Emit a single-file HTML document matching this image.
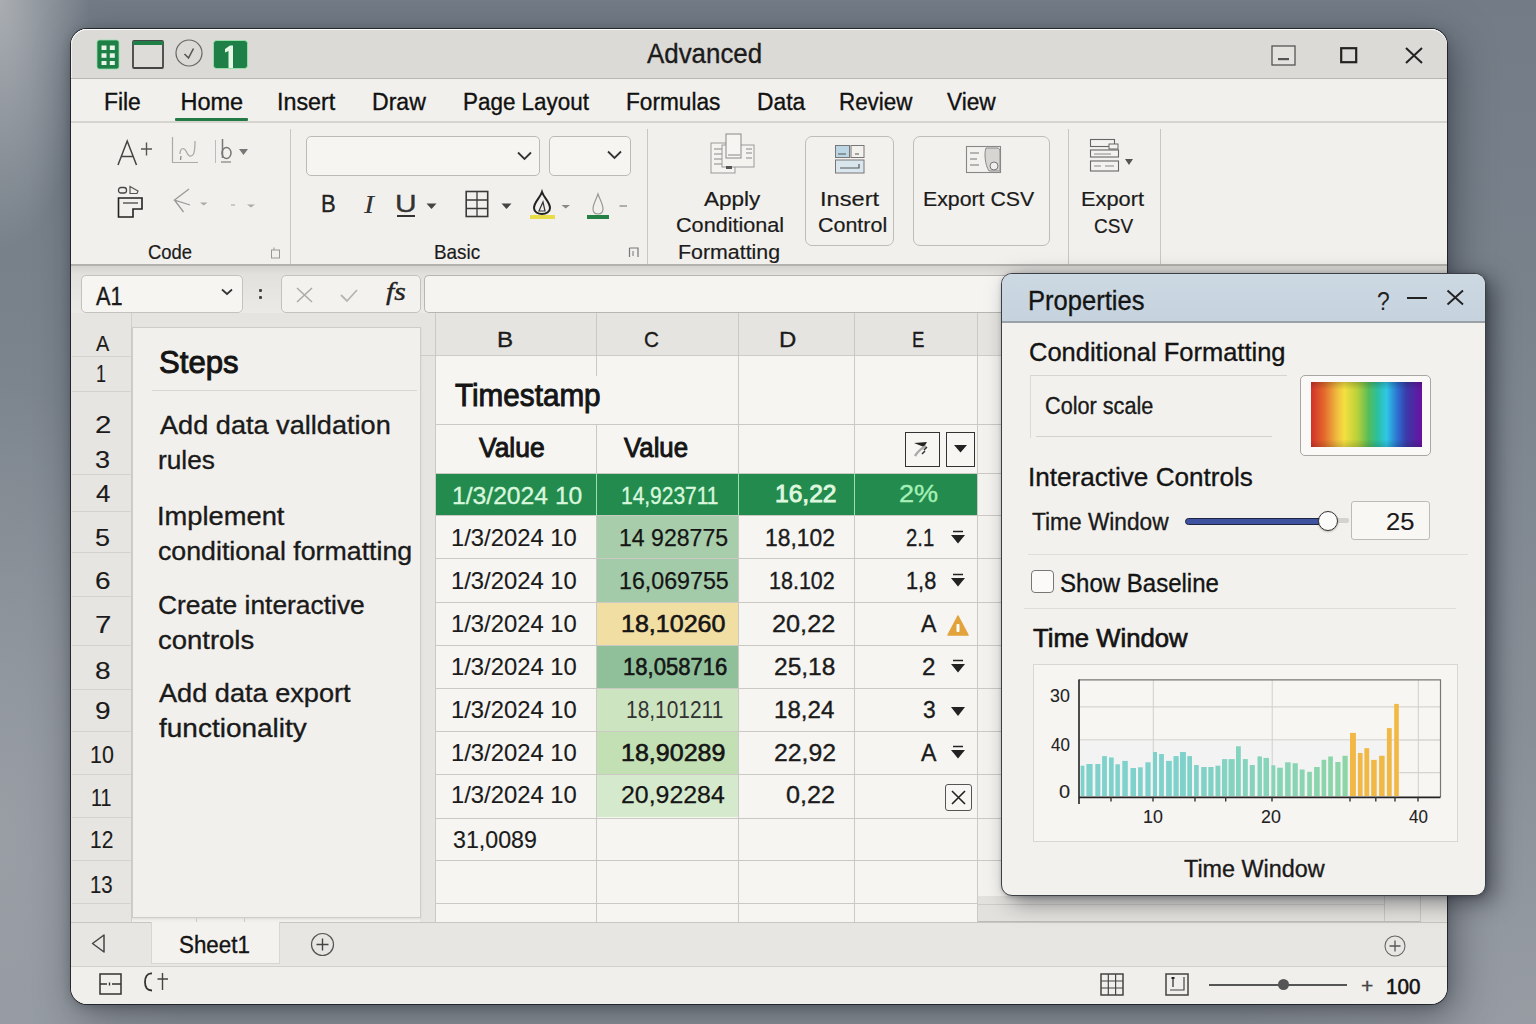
<!DOCTYPE html>
<html><head><meta charset="utf-8"><style>
html,body{margin:0;padding:0;width:1536px;height:1024px;overflow:hidden;}
body{position:relative;font-family:"Liberation Sans",sans-serif;background:#7a838c;}
.t{position:absolute;line-height:0;white-space:pre;transform-origin:0 0;}
svg{position:absolute;overflow:visible;}
</style></head><body>
<div style="position:absolute;left:0;top:0;width:1536px;height:1024px;background:linear-gradient(180deg,#737c86 0%,#79828b 30%,#868d95 65%,#8e959c 100%);"></div>
<div style="position:absolute;left:0;top:0;width:1536px;height:1024px;background:radial-gradient(ellipse 90px 250px at 0px 0px,rgba(215,215,215,0.55),rgba(215,215,215,0) 100%);"></div>
<div style="position:absolute;left:0;top:0;width:1536px;height:1024px;background:radial-gradient(ellipse 200px 450px at 0px 830px,rgba(180,183,187,0.35),rgba(180,183,187,0) 100%);"></div>
<div style="position:absolute;left:0;top:0;width:1536px;height:1024px;background:radial-gradient(ellipse 300px 300px at 1536px 1024px,rgba(175,178,182,0.25),rgba(175,178,182,0) 100%);"></div>
<div style="position:absolute;left:71px;top:29px;width:1376px;height:975px;border-radius:16px;background:#f1efeb;box-shadow:0 0 0 1px rgba(25,28,32,0.85),6px 10px 38px rgba(25,30,40,0.5),0 2px 10px rgba(25,30,40,0.25);"></div>
<div style="position:absolute;left:71px;top:29px;width:1376px;height:50px;background:#dcdad6;border-radius:16px 16px 0 0;box-shadow:inset 0 1px 0 rgba(255,255,255,0.9),inset 1px 0 0 rgba(255,255,255,0.6);"></div>
<div style="position:absolute;left:71px;top:78px;width:1376px;height:1px;background:#b9b7b3;"></div>
<div style="position:absolute;left:71px;top:79px;width:1376px;height:1px;background:#faf9f7;"></div>
<svg style="left:96px;top:39px;" width="24" height="31" viewBox="0 0 24 31"><rect x="1" y="1" width="22" height="29" rx="2.5" fill="#1e8046" stroke="#8fe0a8" stroke-width="0.8"/><rect x="5.5" y="6.5" width="5" height="4.5" fill="#e8f5e8"/><rect x="13.8" y="6.5" width="5" height="4.5" fill="#e8f5e8"/><rect x="5.5" y="14.3" width="5" height="4.5" fill="#e8f5e8"/><rect x="13.8" y="14.3" width="5" height="4.5" fill="#e8f5e8"/><rect x="5.5" y="22" width="5" height="4" fill="#e8f5e8"/><rect x="13.8" y="22" width="5" height="4" fill="#e8f5e8"/></svg>
<svg style="left:132px;top:40px;" width="32" height="29" viewBox="0 0 32 29"><rect x="1" y="1" width="30" height="27" rx="1" fill="#dedcd8" stroke="#444" stroke-width="1.8"/><rect x="1" y="1" width="30" height="4" fill="#1e8046"/></svg>
<svg style="left:175px;top:39px;" width="28" height="28" viewBox="0 0 28 28"><circle cx="14" cy="14" r="13" fill="none" stroke="#666" stroke-width="1.2"/><path d="M9.5 15 L13.5 19 L18.5 9.5" fill="none" stroke="#555" stroke-width="1.6"/></svg>
<svg style="left:213px;top:40px;" width="35" height="29" viewBox="0 0 35 29"><rect x="0.5" y="0.5" width="34" height="28" rx="3" fill="#1e8046" stroke="#9fe8b0" stroke-width="0.8"/><path d="M12 9 L17 5.5 L20 5.5 L20 28 L15.5 28 L15.5 11 L12 12.5 Z" fill="#e6f7e6"/></svg>
<div class="t" style="left:646.90px;top:54.44px;font-size:27.6px;font-weight:400;font-style:normal;font-family:'Liberation Sans';color:#1b1b1b;transform:scaleX(0.9380);-webkit-text-stroke:0.35px #1b1b1b;">Advanced</div>
<svg style="left:1271px;top:45px;" width="25" height="21" viewBox="0 0 25 21"><rect x="1" y="1" width="23" height="19" fill="#e4e2de" stroke="#555" stroke-width="1.3"/><rect x="7" y="13" width="11" height="2.2" fill="#555"/></svg>
<svg style="left:1340px;top:47px;" width="18" height="17" viewBox="0 0 18 17"><rect x="1.2" y="1.2" width="15" height="14" fill="none" stroke="#222" stroke-width="2.2"/></svg>
<svg style="left:1404px;top:46px;" width="20" height="19" viewBox="0 0 20 19"><path d="M2 2 L18 17 M18 2 L2 17" stroke="#222" stroke-width="2"/></svg>
<div style="position:absolute;left:71px;top:79px;width:1376px;height:43px;background:#f2f0ec;"></div>
<div style="position:absolute;left:71px;top:121px;width:1376px;height:2px;background:#d6d4cf;"></div>
<div class="t" style="left:104.06px;top:101.86px;font-size:23.5px;font-weight:400;font-style:normal;font-family:'Liberation Sans';color:#111;transform:scaleX(0.9714);-webkit-text-stroke:0.35px #111;">File</div>
<div class="t" style="left:180.50px;top:101.86px;font-size:23.5px;font-weight:400;font-style:normal;font-family:'Liberation Sans';color:#111;-webkit-text-stroke:0.35px #111;">Home</div>
<div class="t" style="left:276.52px;top:101.86px;font-size:23.5px;font-weight:400;font-style:normal;font-family:'Liberation Sans';color:#111;transform:scaleX(0.9912);-webkit-text-stroke:0.35px #111;">Insert</div>
<div class="t" style="left:372.04px;top:101.86px;font-size:23.5px;font-weight:400;font-style:normal;font-family:'Liberation Sans';color:#111;transform:scaleX(0.9811);-webkit-text-stroke:0.35px #111;">Draw</div>
<div class="t" style="left:463.09px;top:101.86px;font-size:23.5px;font-weight:400;font-style:normal;font-family:'Liberation Sans';color:#111;transform:scaleX(0.9538);-webkit-text-stroke:0.35px #111;">Page Layout</div>
<div class="t" style="left:625.57px;top:101.86px;font-size:23.5px;font-weight:400;font-style:normal;font-family:'Liberation Sans';color:#111;transform:scaleX(0.9635);-webkit-text-stroke:0.35px #111;">Formulas</div>
<div class="t" style="left:757.36px;top:101.86px;font-size:23.5px;font-weight:400;font-style:normal;font-family:'Liberation Sans';color:#111;transform:scaleX(0.9708);-webkit-text-stroke:0.35px #111;">Data</div>
<div class="t" style="left:838.60px;top:101.86px;font-size:23.5px;font-weight:400;font-style:normal;font-family:'Liberation Sans';color:#111;transform:scaleX(0.9520);-webkit-text-stroke:0.35px #111;">Review</div>
<div class="t" style="left:947.40px;top:101.86px;font-size:23.5px;font-weight:400;font-style:normal;font-family:'Liberation Sans';color:#111;transform:scaleX(0.9647);-webkit-text-stroke:0.35px #111;">View</div>
<div style="position:absolute;left:175px;top:118px;width:73px;height:3px;background:#237a45;border-radius:1px;"></div>
<div style="position:absolute;left:71px;top:123px;width:1376px;height:142px;background:#f2f0ec;"></div>
<div style="position:absolute;left:71px;top:264px;width:1376px;height:2px;background:#b3b1ad;"></div>
<div style="position:absolute;left:290px;top:129px;width:1px;height:135px;background:#c9c7c2;"></div>
<div style="position:absolute;left:647px;top:129px;width:1px;height:135px;background:#c9c7c2;"></div>
<div style="position:absolute;left:1068px;top:129px;width:1px;height:135px;background:#c9c7c2;"></div>
<div style="position:absolute;left:1160px;top:129px;width:1px;height:135px;background:#c9c7c2;"></div>
<div class="t" style="left:148.12px;top:251.72px;font-size:21px;font-weight:400;font-style:normal;font-family:'Liberation Sans';color:#1b1b1b;transform:scaleX(0.8776);-webkit-text-stroke:0.2px #1b1b1b;">Code</div>
<div class="t" style="left:434.20px;top:251.72px;font-size:21px;font-weight:400;font-style:normal;font-family:'Liberation Sans';color:#1b1b1b;transform:scaleX(0.8980);-webkit-text-stroke:0.2px #1b1b1b;">Basic</div>
<svg style="left:270px;top:246px;" width="12" height="13" viewBox="0 0 12 13"><rect x="1.5" y="4" width="8" height="8" fill="none" stroke="#999" stroke-width="1"/><path d="M4 1.5 L4 4" stroke="#999"/></svg>
<svg style="left:628px;top:246px;" width="12" height="13" viewBox="0 0 12 13"><path d="M1.5 2 L10 2 L10 11 M1.5 2 L1.5 11" fill="none" stroke="#777" stroke-width="1.2"/><path d="M5 5 L5 10" stroke="#777"/></svg>
<svg style="left:115px;top:139px;" width="40" height="28" viewBox="0 0 40 28"><path d="M3 26 L12.2 2 L21.5 26 M6.5 17.5 L18 17.5" fill="none" stroke="#444" stroke-width="1.5"/><path d="M31.5 3.5 L31.5 16.5 M26 10 L37 10" stroke="#555" stroke-width="1.4"/></svg>
<svg style="left:171px;top:136px;" width="28" height="28" viewBox="0 0 28 28"><path d="M1.5 1 L1.5 26.5 L27 26.5" fill="none" stroke="#aaa" stroke-width="1.2"/><path d="M9 18 C9 12 13 11 15 15 C17 20 20 22 22.5 18 C24 15 24 8 24 5" fill="none" stroke="#aaa" stroke-width="1.3"/><path d="M10 20 L9.5 24" stroke="#888" stroke-width="1.2"/></svg>
<svg style="left:214px;top:138px;" width="36" height="26" viewBox="0 0 36 26"><path d="M1.5 2 L1.5 25" stroke="#bbb" stroke-width="1"/><path d="M8.5 1 L8.5 20" stroke="#777" stroke-width="1.5"/><ellipse cx="12.5" cy="15" rx="4.5" ry="5.5" fill="none" stroke="#777" stroke-width="1.5"/><path d="M7 24 L17 24" stroke="#888" stroke-width="1.3"/><path d="M25 11 L34 11 L29.5 17 Z" fill="#777"/></svg>
<svg style="left:116px;top:185px;" width="30" height="34" viewBox="0 0 30 34"><rect x="2.5" y="2.5" width="8" height="5.5" rx="2.5" fill="none" stroke="#444" stroke-width="1.3"/><path d="M14 1.5 L22 6 L21 8.5 L14 8.5 Z" fill="none" stroke="#555" stroke-width="1.2"/><path d="M2.5 32 L2.5 13 L26 13 L26 24 L17 24 L17 32 Z" fill="none" stroke="#222" stroke-width="1.6"/><path d="M7 18 L22 18" stroke="#444" stroke-width="1.3"/></svg>
<svg style="left:172px;top:186px;" width="20" height="29" viewBox="0 0 20 29"><path d="M17 3 L2.5 14 L18 19 M2.5 14 L11.5 26" fill="none" stroke="#999" stroke-width="1.3"/></svg>
<svg style="left:199px;top:201px;" width="10" height="6" viewBox="0 0 10 6"><path d="M1 1.5 L8.5 1.5 L4.8 4.5 Z" fill="#aaa"/></svg>
<svg style="left:230px;top:203px;" width="28" height="6" viewBox="0 0 28 6"><path d="M1 2 L5 2" stroke="#bbb" stroke-width="1.5"/><path d="M17 1.5 L25 1.5 L21 4.5 Z" fill="#aaa"/></svg>
<div style="position:absolute;left:306px;top:136px;width:234px;height:40px;box-sizing:border-box;background:#f6f5f2;border:1.4px solid #bcbab5;border-radius:5px;"></div>
<div style="position:absolute;left:549px;top:136px;width:82px;height:40px;box-sizing:border-box;background:#f6f5f2;border:1.4px solid #bcbab5;border-radius:5px;"></div>
<svg style="left:516px;top:150px;" width="18" height="12" viewBox="0 0 18 12"><path d="M2 2.5 L8.5 9 L15 2.5" fill="none" stroke="#333" stroke-width="1.8"/></svg>
<svg style="left:606px;top:149px;" width="18" height="12" viewBox="0 0 18 12"><path d="M2 2.5 L8.5 9 L15 2.5" fill="none" stroke="#333" stroke-width="1.8"/></svg>
<div class="t" style="left:320.71px;top:204.44px;font-size:24.7px;font-weight:400;font-style:normal;font-family:'Liberation Sans';color:#222;transform:scaleX(0.8929);-webkit-text-stroke:0.35px #222;">B</div>
<div class="t" style="left:364.00px;top:204.94px;font-size:24.7px;font-weight:400;font-style:italic;font-family:'Liberation Serif';color:#333;transform:scaleX(1.2222);">I</div>
<div class="t" style="left:395.07px;top:204.44px;font-size:24.7px;font-weight:400;font-style:normal;font-family:'Liberation Sans';color:#333;transform:scaleX(1.2143);-webkit-text-stroke:0.35px #333;">U</div>
<div style="position:absolute;left:397px;top:215px;width:18px;height:2px;background:#333;"></div>
<svg style="left:425px;top:202px;" width="14" height="8" viewBox="0 0 14 8"><path d="M1.5 1.5 L11.5 1.5 L6.5 7 Z" fill="#444"/></svg>
<svg style="left:465px;top:190px;" width="24" height="28" viewBox="0 0 24 28"><rect x="1.2" y="1.5" width="21.5" height="25" fill="none" stroke="#3a3a3a" stroke-width="1.6"/><path d="M12 1.5 L12 26.5 M1 10 L22.5 10 M1 18.5 L22.5 18.5" stroke="#3a3a3a" stroke-width="1.3"/></svg>
<svg style="left:500px;top:202px;" width="14" height="8" viewBox="0 0 14 8"><path d="M1.5 1.5 L11.5 1.5 L6.5 7 Z" fill="#444"/></svg>
<svg style="left:530px;top:190px;" width="26" height="30" viewBox="0 0 26 30"><path d="M12 2 C10 8 4 12 4 18 C4 22 8 24 12 24 C16 24 20 22 20 18 C20 12 14 8 12 2 Z" fill="none" stroke="#222" stroke-width="2"/><path d="M9 21 L15 21 L13 12 Z" fill="none" stroke="#333" stroke-width="1.2"/><rect x="0" y="25" width="25" height="4" fill="#e8dc4a"/></svg>
<svg style="left:560px;top:204px;" width="12" height="6" viewBox="0 0 12 6"><path d="M1.5 1 L10 1 L5.7 4.5 Z" fill="#888"/></svg>
<svg style="left:587px;top:192px;" width="23" height="28" viewBox="0 0 23 28"><path d="M11 2 C9 8 6 12 6 17 C6 20 8 22 11 22 C14 22 16 20 16 17 C16 12 13 8 11 2 Z" fill="none" stroke="#999" stroke-width="1.2"/><rect x="0" y="23" width="22" height="4" fill="#258046"/></svg>
<svg style="left:618px;top:204px;" width="12" height="6" viewBox="0 0 12 6"><path d="M1.5 2 L9 2" stroke="#999" stroke-width="1.5"/></svg>
<svg style="left:710px;top:133px;" width="46" height="42" viewBox="0 0 46 42"><rect x="1" y="10" width="24" height="30" fill="#f4f3ef" stroke="#999" stroke-width="1"/><path d="M4 16 L14 16 M4 21 L12 21 M4 26 L14 26 M4 31 L20 31" stroke="#888" stroke-width="1.2"/><rect x="12" y="12" width="32" height="22" fill="#f4f3ef" stroke="#999" stroke-width="1"/><rect x="16" y="1" width="15" height="24" fill="#f6f5f1" stroke="#888" stroke-width="1"/><path d="M18 22 L30 22 M36 16 L42 16 M36 20 L42 20 M36 25 L42 25" stroke="#888" stroke-width="1.1"/><rect x="16" y="33" width="6" height="3" fill="#555"/></svg>
<div class="t" style="left:704.00px;top:198.90px;font-size:20.5px;font-weight:400;font-style:normal;font-family:'Liberation Sans';color:#1b1b1b;transform:scaleX(1.0980);-webkit-text-stroke:0.2px #1b1b1b;">Apply</div>
<div class="t" style="left:676.45px;top:225.40px;font-size:20.5px;font-weight:400;font-style:normal;font-family:'Liberation Sans';color:#1b1b1b;transform:scaleX(1.0545);-webkit-text-stroke:0.2px #1b1b1b;">Conditional</div>
<div class="t" style="left:678.46px;top:251.90px;font-size:20.5px;font-weight:400;font-style:normal;font-family:'Liberation Sans';color:#1b1b1b;transform:scaleX(1.0417);-webkit-text-stroke:0.2px #1b1b1b;">Formatting</div>
<div style="position:absolute;left:805px;top:136px;width:89px;height:110px;box-sizing:border-box;border:1.3px solid #bfbdb8;border-radius:7px;background:#f3f1ed;"></div>
<svg style="left:834px;top:144px;" width="32" height="32" viewBox="0 0 32 32"><rect x="1.5" y="1.5" width="14" height="12" fill="#bcd6e6" stroke="#777" stroke-width="1"/><rect x="17" y="1.5" width="13" height="12" fill="#f2f1ee" stroke="#777" stroke-width="1"/><path d="M4 10 L12 10 M21 10 L25 10" stroke="#555" stroke-width="1.2"/><rect x="1.5" y="16" width="28.5" height="13" fill="#d9e6ee" stroke="#777" stroke-width="1"/><path d="M6 24 L25 24 L25 20" fill="none" stroke="#555" stroke-width="1.2"/></svg>
<div class="t" style="left:820.19px;top:198.90px;font-size:20.5px;font-weight:400;font-style:normal;font-family:'Liberation Sans';color:#1b1b1b;transform:scaleX(1.1531);-webkit-text-stroke:0.2px #1b1b1b;">Insert</div>
<div class="t" style="left:817.95px;top:224.90px;font-size:20.5px;font-weight:400;font-style:normal;font-family:'Liberation Sans';color:#1b1b1b;transform:scaleX(1.0469);-webkit-text-stroke:0.2px #1b1b1b;">Control</div>
<div style="position:absolute;left:913px;top:136px;width:137px;height:110px;box-sizing:border-box;border:1.3px solid #bfbdb8;border-radius:7px;background:#f3f1ed;"></div>
<svg style="left:965px;top:145px;" width="38" height="30" viewBox="0 0 38 30"><rect x="1.5" y="1.5" width="34" height="26" fill="#f2f1ee" stroke="#888" stroke-width="1.1"/><path d="M5 8 L14 8 M5 14 L12 14 M5 20 L14 20" stroke="#777" stroke-width="1.2"/><path d="M21 3 L32 3 C34 3 35 4 35 7 L35 26 L24 26 C20 20 19 8 21 3 Z" fill="#d6d5d2" stroke="#888" stroke-width="1"/><circle cx="29" cy="21" r="4" fill="#eee" stroke="#777" stroke-width="1"/></svg>
<div class="t" style="left:922.96px;top:198.90px;font-size:20.5px;font-weight:400;font-style:normal;font-family:'Liberation Sans';color:#1b1b1b;transform:scaleX(1.0377);-webkit-text-stroke:0.2px #1b1b1b;">Export CSV</div>
<svg style="left:1089px;top:138px;" width="46" height="36" viewBox="0 0 46 36"><rect x="1.5" y="1.5" width="24" height="7" fill="#f3f2ee" stroke="#666" stroke-width="1.1"/><rect x="20" y="6" width="9" height="5" fill="#f3f2ee" stroke="#666" stroke-width="1"/><rect x="1.5" y="12" width="28" height="7" fill="#f3f2ee" stroke="#666" stroke-width="1.1"/><path d="M5 16 L22 16" stroke="#888"/><rect x="1.5" y="23" width="28" height="10" fill="#f3f2ee" stroke="#666" stroke-width="1.1"/><path d="M5 28 L12 28 M16 28 L25 28" stroke="#888" stroke-width="1.2"/><path d="M36 21 L44 21 L40 27 Z" fill="#555"/></svg>
<div class="t" style="left:1080.94px;top:199.40px;font-size:20.5px;font-weight:400;font-style:normal;font-family:'Liberation Sans';color:#1b1b1b;transform:scaleX(1.0621);-webkit-text-stroke:0.2px #1b1b1b;">Export</div>
<div class="t" style="left:1094.07px;top:225.60px;font-size:20.5px;font-weight:400;font-style:normal;font-family:'Liberation Sans';color:#1b1b1b;transform:scaleX(0.9268);-webkit-text-stroke:0.2px #1b1b1b;">CSV</div>
<div style="position:absolute;left:71px;top:266px;width:1376px;height:48px;background:linear-gradient(180deg,#d6d4d0 0px,#e3e1dd 9px,#eceae6 100%);"></div>
<div style="position:absolute;left:81px;top:275px;width:162px;height:38px;box-sizing:border-box;background:#f6f5f2;border:1.3px solid #c4c2bd;border-radius:5px;"></div>
<div class="t" style="left:96.00px;top:296.16px;font-size:25.5px;font-weight:400;font-style:normal;font-family:'Liberation Sans';color:#1a1a1a;transform:scaleX(0.8500);-webkit-text-stroke:0.35px #1a1a1a;">A1</div>
<svg style="left:220px;top:287px;" width="14" height="10" viewBox="0 0 14 10"><path d="M2 2.5 L7 7 L12 2.5" fill="none" stroke="#333" stroke-width="1.7"/></svg>
<div style="position:absolute;left:259px;top:289px;width:3px;height:3px;background:#444;border-radius:1px;"></div>
<div style="position:absolute;left:259px;top:296px;width:3px;height:3px;background:#444;border-radius:1px;"></div>
<div style="position:absolute;left:281px;top:275px;width:140px;height:38px;box-sizing:border-box;background:#f3f2ee;border:1.3px solid #c4c2bd;border-radius:5px;"></div>
<svg style="left:295px;top:286px;" width="19" height="18" viewBox="0 0 19 18"><path d="M2 2 L17 16 M17 2 L2 16" stroke="#aaa" stroke-width="1.5"/></svg>
<svg style="left:339px;top:288px;" width="20" height="15" viewBox="0 0 20 15"><path d="M2 7 L8 13 L18 2" fill="none" stroke="#b5b5b5" stroke-width="1.8"/></svg>
<div class="t" style="left:386.00px;top:292.34px;font-size:25px;font-weight:400;font-style:italic;font-family:'Liberation Serif';color:#222;transform:scaleX(1.1875);-webkit-text-stroke:0.35px #222;">fs</div>
<div style="position:absolute;left:424px;top:275px;width:1023px;height:38px;box-sizing:border-box;background:#f5f4f1;border:1.3px solid #b8b6b1;border-right:none;border-radius:5px 0 0 5px;"></div>
<div style="position:absolute;left:71px;top:313px;width:1376px;height:43px;background:#e6e4e0;"></div>
<div style="position:absolute;left:131px;top:355px;width:1316px;height:2px;background:#cfcdc8;"></div>
<div style="position:absolute;left:71px;top:313px;width:60px;height:609px;background:#e7e5e1;"></div>
<div style="position:absolute;left:131px;top:313px;width:1px;height:609px;background:#d2d0cb;"></div>
<div style="position:absolute;left:72px;top:356px;width:59px;height:1px;background:#d4d2cd;"></div>
<div style="position:absolute;left:72px;top:391px;width:59px;height:1px;background:#d4d2cd;"></div>
<div style="position:absolute;left:72px;top:474px;width:59px;height:1px;background:#d4d2cd;"></div>
<div style="position:absolute;left:72px;top:511px;width:59px;height:1px;background:#d4d2cd;"></div>
<div style="position:absolute;left:72px;top:552px;width:59px;height:1px;background:#d4d2cd;"></div>
<div style="position:absolute;left:72px;top:596px;width:59px;height:1px;background:#d4d2cd;"></div>
<div style="position:absolute;left:72px;top:645px;width:59px;height:1px;background:#d4d2cd;"></div>
<div style="position:absolute;left:72px;top:689px;width:59px;height:1px;background:#d4d2cd;"></div>
<div style="position:absolute;left:72px;top:731px;width:59px;height:1px;background:#d4d2cd;"></div>
<div style="position:absolute;left:72px;top:774px;width:59px;height:1px;background:#d4d2cd;"></div>
<div style="position:absolute;left:72px;top:817px;width:59px;height:1px;background:#d4d2cd;"></div>
<div style="position:absolute;left:72px;top:860px;width:59px;height:1px;background:#d4d2cd;"></div>
<div style="position:absolute;left:72px;top:903px;width:59px;height:1px;background:#d4d2cd;"></div>
<div class="t" style="left:96.20px;top:343.00px;font-size:22.8px;font-weight:400;font-style:normal;font-family:'Liberation Sans';color:#1b1b1b;transform:scaleX(0.8733);-webkit-text-stroke:0.15px #1b1b1b;">A</div>
<div class="t" style="left:96.00px;top:373.68px;font-size:24px;font-weight:400;font-style:normal;font-family:'Liberation Sans';color:#1b1b1b;transform:scaleX(0.7500);-webkit-text-stroke:0.15px #1b1b1b;">1</div>
<div class="t" style="left:94.77px;top:425.28px;font-size:24px;font-weight:400;font-style:normal;font-family:'Liberation Sans';color:#1b1b1b;transform:scaleX(1.2273);-webkit-text-stroke:0.15px #1b1b1b;">2</div>
<div class="t" style="left:94.88px;top:460.38px;font-size:24px;font-weight:400;font-style:normal;font-family:'Liberation Sans';color:#1b1b1b;transform:scaleX(1.1250);-webkit-text-stroke:0.15px #1b1b1b;">3</div>
<div class="t" style="left:96.00px;top:493.88px;font-size:24px;font-weight:400;font-style:normal;font-family:'Liberation Sans';color:#1b1b1b;transform:scaleX(1.0769);-webkit-text-stroke:0.15px #1b1b1b;">4</div>
<div class="t" style="left:94.88px;top:537.68px;font-size:24px;font-weight:400;font-style:normal;font-family:'Liberation Sans';color:#1b1b1b;transform:scaleX(1.1250);-webkit-text-stroke:0.15px #1b1b1b;">5</div>
<div class="t" style="left:94.83px;top:581.18px;font-size:24px;font-weight:400;font-style:normal;font-family:'Liberation Sans';color:#1b1b1b;transform:scaleX(1.1667);-webkit-text-stroke:0.15px #1b1b1b;">6</div>
<div class="t" style="left:94.77px;top:624.68px;font-size:24px;font-weight:400;font-style:normal;font-family:'Liberation Sans';color:#1b1b1b;transform:scaleX(1.2273);-webkit-text-stroke:0.15px #1b1b1b;">7</div>
<div class="t" style="left:94.83px;top:670.68px;font-size:24px;font-weight:400;font-style:normal;font-family:'Liberation Sans';color:#1b1b1b;transform:scaleX(1.1667);-webkit-text-stroke:0.15px #1b1b1b;">8</div>
<div class="t" style="left:94.83px;top:710.68px;font-size:24px;font-weight:400;font-style:normal;font-family:'Liberation Sans';color:#1b1b1b;transform:scaleX(1.1667);-webkit-text-stroke:0.15px #1b1b1b;">9</div>
<div class="t" style="left:89.82px;top:755.28px;font-size:24px;font-weight:400;font-style:normal;font-family:'Liberation Sans';color:#1b1b1b;transform:scaleX(0.8917);-webkit-text-stroke:0.15px #1b1b1b;">10</div>
<div class="t" style="left:91.36px;top:798.08px;font-size:24px;font-weight:400;font-style:normal;font-family:'Liberation Sans';color:#1b1b1b;transform:scaleX(0.8182);-webkit-text-stroke:0.15px #1b1b1b;">11</div>
<div class="t" style="left:89.85px;top:840.08px;font-size:24px;font-weight:400;font-style:normal;font-family:'Liberation Sans';color:#1b1b1b;transform:scaleX(0.8750);-webkit-text-stroke:0.15px #1b1b1b;">12</div>
<div class="t" style="left:89.90px;top:884.68px;font-size:24px;font-weight:400;font-style:normal;font-family:'Liberation Sans';color:#1b1b1b;transform:scaleX(0.8500);-webkit-text-stroke:0.15px #1b1b1b;">13</div>
<div style="position:absolute;left:420px;top:356px;width:15px;height:566px;background:#e7e5e1;"></div>
<div style="position:absolute;left:978px;top:356px;width:469px;height:566px;background:#f3f2ee;"></div>
<div style="position:absolute;left:435px;top:356px;width:543px;height:566px;background:#f6f5f2;"></div>
<div style="position:absolute;left:435px;top:473px;width:543px;height:42px;background:#238b4e;"></div>
<div style="position:absolute;left:595.5px;top:515px;width:142.5px;height:43px;background:#a8cdaa;"></div>
<div style="position:absolute;left:595.5px;top:558px;width:142.5px;height:43.5px;background:#a3caa9;"></div>
<div style="position:absolute;left:595.5px;top:601.5px;width:142.5px;height:43.5px;background:#f1dea3;"></div>
<div style="position:absolute;left:595.5px;top:645px;width:142.5px;height:43px;background:#90c09a;"></div>
<div style="position:absolute;left:595.5px;top:688px;width:142.5px;height:43px;background:#cde4c0;"></div>
<div style="position:absolute;left:595.5px;top:731px;width:142.5px;height:43px;background:#c3dfb4;"></div>
<div style="position:absolute;left:595.5px;top:774px;width:142.5px;height:43px;background:#d5e9cc;"></div>
<div style="position:absolute;left:435px;top:424px;width:566px;height:1px;background:#cbc9c4;"></div>
<div style="position:absolute;left:435px;top:473px;width:566px;height:1px;background:#cbc9c4;"></div>
<div style="position:absolute;left:435px;top:515px;width:566px;height:1px;background:#cbc9c4;"></div>
<div style="position:absolute;left:435px;top:558px;width:566px;height:1px;background:#cbc9c4;"></div>
<div style="position:absolute;left:435px;top:602px;width:566px;height:1px;background:#cbc9c4;"></div>
<div style="position:absolute;left:435px;top:645px;width:566px;height:1px;background:#cbc9c4;"></div>
<div style="position:absolute;left:435px;top:688px;width:566px;height:1px;background:#cbc9c4;"></div>
<div style="position:absolute;left:435px;top:731px;width:566px;height:1px;background:#cbc9c4;"></div>
<div style="position:absolute;left:435px;top:774px;width:566px;height:1px;background:#cbc9c4;"></div>
<div style="position:absolute;left:435px;top:818px;width:566px;height:1px;background:#cbc9c4;"></div>
<div style="position:absolute;left:435px;top:860px;width:566px;height:1px;background:#cbc9c4;"></div>
<div style="position:absolute;left:435px;top:903px;width:566px;height:1px;background:#cbc9c4;"></div>
<div style="position:absolute;left:435px;top:313px;width:1px;height:609px;background:#cbc9c4;"></div>
<div style="position:absolute;left:738px;top:313px;width:1px;height:609px;background:#cbc9c4;"></div>
<div style="position:absolute;left:854px;top:313px;width:1px;height:609px;background:#cbc9c4;"></div>
<div style="position:absolute;left:977px;top:313px;width:1px;height:609px;background:#cbc9c4;"></div>
<div style="position:absolute;left:596px;top:313px;width:1px;height:63px;background:#cbc9c4;"></div>
<div style="position:absolute;left:596px;top:424px;width:1px;height:498px;background:#cbc9c4;"></div>
<div style="position:absolute;left:596px;top:473px;width:1px;height:42px;background:#9fdcae;"></div>
<div style="position:absolute;left:738px;top:473px;width:1px;height:42px;background:#9fdcae;"></div>
<div style="position:absolute;left:854px;top:473px;width:1px;height:42px;background:#9fdcae;"></div>
<div class="t" style="left:497.18px;top:339.20px;font-size:22.8px;font-weight:400;font-style:normal;font-family:'Liberation Sans';color:#1b1b1b;transform:scaleX(1.0583);-webkit-text-stroke:0.35px #1b1b1b;">B</div>
<div class="t" style="left:644.09px;top:339.20px;font-size:22.8px;font-weight:400;font-style:normal;font-family:'Liberation Sans';color:#1b1b1b;transform:scaleX(0.9067);-webkit-text-stroke:0.35px #1b1b1b;">C</div>
<div class="t" style="left:778.90px;top:339.20px;font-size:22.8px;font-weight:400;font-style:normal;font-family:'Liberation Sans';color:#1b1b1b;transform:scaleX(1.0500);-webkit-text-stroke:0.35px #1b1b1b;">D</div>
<div class="t" style="left:912.47px;top:339.20px;font-size:22.8px;font-weight:400;font-style:normal;font-family:'Liberation Sans';color:#1b1b1b;transform:scaleX(0.8154);-webkit-text-stroke:0.35px #1b1b1b;">E</div>
<div class="t" style="left:455.40px;top:394.91px;font-size:32px;font-weight:400;font-style:normal;font-family:'Liberation Sans';color:#151515;transform:scaleX(0.9269);-webkit-text-stroke:0.95px #151515;">Timestamp</div>
<div class="t" style="left:479.00px;top:448.14px;font-size:27px;font-weight:400;font-style:normal;font-family:'Liberation Sans';color:#151515;transform:scaleX(0.9791);-webkit-text-stroke:0.95px #151515;">Value</div>
<div class="t" style="left:624.00px;top:448.14px;font-size:27px;font-weight:400;font-style:normal;font-family:'Liberation Sans';color:#151515;transform:scaleX(0.9552);-webkit-text-stroke:0.95px #151515;">Value</div>
<div style="position:absolute;left:905px;top:432px;width:35px;height:35px;box-sizing:border-box;border:1.3px solid #333;background:#f7f6f3;"></div>
<svg style="left:912px;top:440px;" width="22" height="20" viewBox="0 0 22 20"><path d="M2 3 L15 2 L12 7 Z" fill="#222"/><path d="M3 16 C6 11 10 8 14 6" stroke="#aaa" stroke-width="2.5" fill="none"/><path d="M12 10 L15 7 M10 14 L13 11" stroke="#333" stroke-width="1.5"/></svg>
<div style="position:absolute;left:946px;top:432px;width:29px;height:35px;box-sizing:border-box;border:1.3px solid #333;background:#f7f6f3;"></div>
<svg style="left:953px;top:444px;" width="16" height="10" viewBox="0 0 16 10"><path d="M1 1 L14 1 L7.5 8.5 Z" fill="#222"/></svg>
<div class="t" style="left:451.97px;top:495.68px;font-size:24px;font-weight:400;font-style:normal;font-family:'Liberation Sans';color:#d9f7dc;transform:scaleX(1.0280);-webkit-text-stroke:0.35px #d9f7dc;">1/3/2024 10</div>
<div class="t" style="left:621.13px;top:495.68px;font-size:24px;font-weight:400;font-style:normal;font-family:'Liberation Sans';color:#d9f7dc;transform:scaleX(0.8727);-webkit-text-stroke:0.35px #d9f7dc;">14,923711</div>
<div class="t" style="left:774.50px;top:494.31px;font-size:24.5px;font-weight:400;font-style:normal;font-family:'Liberation Sans';color:#dff7df;transform:scaleX(1.0033);-webkit-text-stroke:0.95px #dff7df;">16,22</div>
<div class="t" style="left:898.69px;top:494.31px;font-size:24.5px;font-weight:400;font-style:normal;font-family:'Liberation Sans';color:#a6f0b6;transform:scaleX(1.1059);-webkit-text-stroke:0.35px #a6f0b6;">2%</div>
<div class="t" style="left:451.02px;top:537.68px;font-size:24px;font-weight:400;font-style:normal;font-family:'Liberation Sans';color:#1b1b1b;transform:scaleX(0.9919);-webkit-text-stroke:0.12px #1b1b1b;">1/3/2024 10</div>
<div class="t" style="left:618.68px;top:537.68px;font-size:24px;font-weight:400;font-style:normal;font-family:'Liberation Sans';color:#151515;transform:scaleX(0.9613);-webkit-text-stroke:0.25px #151515;">14 928775</div>
<div class="t" style="left:765.05px;top:537.68px;font-size:24px;font-weight:400;font-style:normal;font-family:'Liberation Sans';color:#1b1b1b;transform:scaleX(0.9514);-webkit-text-stroke:0.35px #1b1b1b;">18,102</div>
<div class="t" style="left:906.16px;top:537.68px;font-size:24px;font-weight:400;font-style:normal;font-family:'Liberation Sans';color:#1b1b1b;transform:scaleX(0.8438);-webkit-text-stroke:0.35px #1b1b1b;">2.1</div>
<svg style="left:950px;top:530px;" width="16" height="15" viewBox="0 0 16 15"><path d="M3 1.5 L13 1.5" stroke="#222" stroke-width="1.5"/><path d="M1 5 L15 5 L8 13.5 Z" fill="#222"/></svg>
<div class="t" style="left:451.02px;top:580.68px;font-size:24px;font-weight:400;font-style:normal;font-family:'Liberation Sans';color:#1b1b1b;transform:scaleX(0.9919);-webkit-text-stroke:0.12px #1b1b1b;">1/3/2024 10</div>
<div class="t" style="left:618.66px;top:580.68px;font-size:24px;font-weight:400;font-style:normal;font-family:'Liberation Sans';color:#151515;transform:scaleX(0.9676);-webkit-text-stroke:0.25px #151515;">16,069755</div>
<div class="t" style="left:769.10px;top:580.68px;font-size:24px;font-weight:400;font-style:normal;font-family:'Liberation Sans';color:#1b1b1b;transform:scaleX(0.8958);-webkit-text-stroke:0.35px #1b1b1b;">18.102</div>
<div class="t" style="left:906.09px;top:580.68px;font-size:24px;font-weight:400;font-style:normal;font-family:'Liberation Sans';color:#1b1b1b;transform:scaleX(0.9062);-webkit-text-stroke:0.35px #1b1b1b;">1,8</div>
<svg style="left:950px;top:573px;" width="16" height="15" viewBox="0 0 16 15"><path d="M3 1.5 L13 1.5" stroke="#222" stroke-width="1.5"/><path d="M1 5 L15 5 L8 13.5 Z" fill="#222"/></svg>
<div class="t" style="left:451.02px;top:624.48px;font-size:24px;font-weight:400;font-style:normal;font-family:'Liberation Sans';color:#1b1b1b;transform:scaleX(0.9919);-webkit-text-stroke:0.12px #1b1b1b;">1/3/2024 10</div>
<div class="t" style="left:620.66px;top:624.48px;font-size:24px;font-weight:400;font-style:normal;font-family:'Liberation Sans';color:#151515;transform:scaleX(1.0434);-webkit-text-stroke:0.6px #151515;">18,10260</div>
<div class="t" style="left:772.35px;top:624.48px;font-size:24px;font-weight:400;font-style:normal;font-family:'Liberation Sans';color:#1b1b1b;transform:scaleX(1.0534);-webkit-text-stroke:0.35px #1b1b1b;">20,22</div>
<div class="t" style="left:921.30px;top:624.48px;font-size:24px;font-weight:400;font-style:normal;font-family:'Liberation Sans';color:#1b1b1b;transform:scaleX(0.9625);-webkit-text-stroke:0.35px #1b1b1b;">A</div>
<svg style="left:947px;top:614.8px;" width="22" height="22" viewBox="0 0 22 22"><path d="M11 1 L21 20 L1 20 Z" fill="#e2a33c" stroke="#e2a33c" stroke-width="1.5" stroke-linejoin="round"/><rect x="9.5" y="9" width="3" height="8" fill="#fff" rx="1"/></svg>
<div class="t" style="left:451.02px;top:666.88px;font-size:24px;font-weight:400;font-style:normal;font-family:'Liberation Sans';color:#1b1b1b;transform:scaleX(0.9919);-webkit-text-stroke:0.12px #1b1b1b;">1/3/2024 10</div>
<div class="t" style="left:623.08px;top:666.88px;font-size:24px;font-weight:400;font-style:normal;font-family:'Liberation Sans';color:#151515;transform:scaleX(0.9196);-webkit-text-stroke:0.6px #151515;">18,058716</div>
<div class="t" style="left:774.18px;top:666.88px;font-size:24px;font-weight:400;font-style:normal;font-family:'Liberation Sans';color:#1b1b1b;transform:scaleX(1.0224);-webkit-text-stroke:0.35px #1b1b1b;">25,18</div>
<div class="t" style="left:922.49px;top:666.88px;font-size:24px;font-weight:400;font-style:normal;font-family:'Liberation Sans';color:#1b1b1b;transform:scaleX(1.0083);-webkit-text-stroke:0.35px #1b1b1b;">2</div>
<svg style="left:950px;top:659.2px;" width="16" height="15" viewBox="0 0 16 15"><path d="M3 1.5 L13 1.5" stroke="#222" stroke-width="1.5"/><path d="M1 5 L15 5 L8 13.5 Z" fill="#222"/></svg>
<div class="t" style="left:451.02px;top:709.68px;font-size:24px;font-weight:400;font-style:normal;font-family:'Liberation Sans';color:#1b1b1b;transform:scaleX(0.9919);-webkit-text-stroke:0.12px #1b1b1b;">1/3/2024 10</div>
<div class="t" style="left:626.26px;top:709.68px;font-size:24px;font-weight:400;font-style:normal;font-family:'Liberation Sans';color:#333;transform:scaleX(0.8716);">18,101211</div>
<div class="t" style="left:774.19px;top:709.68px;font-size:24px;font-weight:400;font-style:normal;font-family:'Liberation Sans';color:#1b1b1b;transform:scaleX(1.0051);-webkit-text-stroke:0.35px #1b1b1b;">18,24</div>
<div class="t" style="left:923.25px;top:709.68px;font-size:24px;font-weight:400;font-style:normal;font-family:'Liberation Sans';color:#1b1b1b;transform:scaleX(0.9500);-webkit-text-stroke:0.35px #1b1b1b;">3</div>
<svg style="left:950px;top:706px;" width="16" height="11" viewBox="0 0 16 11"><path d="M1 1 L15 1 L8 10 Z" fill="#222"/></svg>
<div class="t" style="left:451.02px;top:752.68px;font-size:24px;font-weight:400;font-style:normal;font-family:'Liberation Sans';color:#1b1b1b;transform:scaleX(0.9919);-webkit-text-stroke:0.12px #1b1b1b;">1/3/2024 10</div>
<div class="t" style="left:620.66px;top:752.68px;font-size:24px;font-weight:400;font-style:normal;font-family:'Liberation Sans';color:#151515;transform:scaleX(1.0434);-webkit-text-stroke:0.6px #151515;">18,90289</div>
<div class="t" style="left:773.67px;top:752.68px;font-size:24px;font-weight:400;font-style:normal;font-family:'Liberation Sans';color:#1b1b1b;transform:scaleX(1.0310);-webkit-text-stroke:0.35px #1b1b1b;">22,92</div>
<div class="t" style="left:921.30px;top:752.68px;font-size:24px;font-weight:400;font-style:normal;font-family:'Liberation Sans';color:#1b1b1b;transform:scaleX(0.9625);-webkit-text-stroke:0.35px #1b1b1b;">A</div>
<svg style="left:950px;top:745px;" width="16" height="15" viewBox="0 0 16 15"><path d="M3 1.5 L13 1.5" stroke="#222" stroke-width="1.5"/><path d="M1 5 L15 5 L8 13.5 Z" fill="#222"/></svg>
<div class="t" style="left:451.02px;top:795.48px;font-size:24px;font-weight:400;font-style:normal;font-family:'Liberation Sans';color:#1b1b1b;transform:scaleX(0.9919);-webkit-text-stroke:0.12px #1b1b1b;">1/3/2024 10</div>
<div class="t" style="left:620.66px;top:795.48px;font-size:24px;font-weight:400;font-style:normal;font-family:'Liberation Sans';color:#151515;transform:scaleX(1.0364);-webkit-text-stroke:0.25px #151515;">20,92284</div>
<div class="t" style="left:786.25px;top:795.48px;font-size:24px;font-weight:400;font-style:normal;font-family:'Liberation Sans';color:#1b1b1b;transform:scaleX(1.0489);-webkit-text-stroke:0.35px #1b1b1b;">0,22</div>
<div style="position:absolute;left:945px;top:784px;width:27px;height:27px;box-sizing:border-box;border:1.3px solid #555;border-radius:3px;background:#f7f6f3;"></div>
<svg style="left:950px;top:789px;" width="17" height="17" viewBox="0 0 17 17"><path d="M2 2 L15 15 M15 2 L2 15" stroke="#222" stroke-width="1.6"/></svg>
<div class="t" style="left:452.83px;top:839.68px;font-size:24px;font-weight:400;font-style:normal;font-family:'Liberation Sans';color:#1b1b1b;transform:scaleX(0.9671);-webkit-text-stroke:0.15px #1b1b1b;">31,0089</div>
<div style="position:absolute;left:132px;top:327px;width:289px;height:591px;box-sizing:border-box;background:#f2f0ec;border:1.3px solid #cfcdc8;box-shadow:0 1px 2px rgba(0,0,0,0.08);"></div>
<div style="position:absolute;left:152px;top:390px;width:265px;height:1px;background:#d8d6d1;"></div>
<div class="t" style="left:158.51px;top:361.59px;font-size:31.5px;font-weight:400;font-style:normal;font-family:'Liberation Sans';color:#141414;transform:scaleX(0.9873);-webkit-text-stroke:0.95px #141414;">Steps</div>
<div class="t" style="left:159.50px;top:424.99px;font-size:26px;font-weight:400;font-style:normal;font-family:'Liberation Sans';color:#1a1a1a;transform:scaleX(1.0432);-webkit-text-stroke:0.35px #1a1a1a;">Add data valldation</div>
<div class="t" style="left:158.49px;top:459.99px;font-size:26px;font-weight:400;font-style:normal;font-family:'Liberation Sans';color:#1a1a1a;transform:scaleX(1.0091);-webkit-text-stroke:0.35px #1a1a1a;">rules</div>
<div class="t" style="left:156.90px;top:515.99px;font-size:26px;font-weight:400;font-style:normal;font-family:'Liberation Sans';color:#1a1a1a;transform:scaleX(1.0500);-webkit-text-stroke:0.35px #1a1a1a;">Implement</div>
<div class="t" style="left:157.97px;top:550.99px;font-size:26px;font-weight:400;font-style:normal;font-family:'Liberation Sans';color:#1a1a1a;transform:scaleX(1.0286);-webkit-text-stroke:0.35px #1a1a1a;">conditional formatting</div>
<div class="t" style="left:157.99px;top:604.99px;font-size:26px;font-weight:400;font-style:normal;font-family:'Liberation Sans';color:#1a1a1a;transform:scaleX(1.0149);-webkit-text-stroke:0.35px #1a1a1a;">Create interactive</div>
<div class="t" style="left:157.94px;top:639.99px;font-size:26px;font-weight:400;font-style:normal;font-family:'Liberation Sans';color:#1a1a1a;transform:scaleX(1.0562);-webkit-text-stroke:0.35px #1a1a1a;">controls</div>
<div class="t" style="left:159.00px;top:693.49px;font-size:26px;font-weight:400;font-style:normal;font-family:'Liberation Sans';color:#1a1a1a;transform:scaleX(1.0435);-webkit-text-stroke:0.35px #1a1a1a;">Add data export</div>
<div class="t" style="left:158.50px;top:728.49px;font-size:26px;font-weight:400;font-style:normal;font-family:'Liberation Sans';color:#1a1a1a;transform:scaleX(1.0766);-webkit-text-stroke:0.35px #1a1a1a;">functionality</div>
<div style="position:absolute;left:196px;top:917px;width:1px;height:5px;background:#ccc;"></div>
<div style="position:absolute;left:244px;top:917px;width:1px;height:5px;background:#ccc;"></div>
<div style="position:absolute;left:71px;top:922px;width:1376px;height:44px;background:#e8e6e2;"></div>
<div style="position:absolute;left:71px;top:922px;width:1376px;height:1px;background:#c8c6c1;"></div>
<svg style="left:90px;top:933px;" width="17" height="21" viewBox="0 0 17 21"><path d="M14 2 L2.5 10.5 L14 19 Z" fill="none" stroke="#444" stroke-width="1.5" stroke-linejoin="round"/></svg>
<div style="position:absolute;left:151px;top:922px;width:129px;height:42px;box-sizing:border-box;background:#f4f2ee;border:1px solid #d8d6d1;border-top:none;"></div>
<div class="t" style="left:179.03px;top:945.03px;font-size:23px;font-weight:400;font-style:normal;font-family:'Liberation Sans';color:#141414;transform:scaleX(0.9718);-webkit-text-stroke:0.35px #141414;">Sheet1</div>
<svg style="left:310px;top:932px;" width="25" height="25" viewBox="0 0 25 25"><circle cx="12.5" cy="12.5" r="11" fill="none" stroke="#555" stroke-width="1.2"/><path d="M12.5 6.5 L12.5 18.5 M6.5 12.5 L18.5 12.5" stroke="#444" stroke-width="1.4"/></svg>
<svg style="left:1383px;top:934px;" width="24" height="24" viewBox="0 0 24 24"><circle cx="12" cy="12" r="10" fill="none" stroke="#666" stroke-width="1.1"/><path d="M12 6.5 L12 17.5 M6.5 12 L17.5 12" stroke="#555" stroke-width="1.3"/></svg>
<div style="position:absolute;left:71px;top:966px;width:1376px;height:38px;background:#f1efeb;border-radius:0 0 16px 16px;"></div>
<div style="position:absolute;left:71px;top:966px;width:1376px;height:1px;background:#d2d0cb;"></div>
<svg style="left:99px;top:973px;" width="23" height="23" viewBox="0 0 23 23"><rect x="1" y="1" width="21" height="20" fill="none" stroke="#333" stroke-width="1.5"/><path d="M1 11 L8 11 M13 11 L22 11 M10.5 9.5 L10.5 12.5" stroke="#333" stroke-width="1.4"/></svg>
<svg style="left:142px;top:970px;" width="30" height="24" viewBox="0 0 30 24"><path d="M10 3.5 C5 3 3 7 3 12 C3 17 5 20.5 10 20.5" fill="none" stroke="#333" stroke-width="1.8"/><path d="M20.5 3 L20.5 20 M15.5 9 L26 9" stroke="#444" stroke-width="1.4"/></svg>
<svg style="left:1100px;top:973px;" width="24" height="23" viewBox="0 0 24 23"><rect x="1" y="1" width="22" height="21" fill="none" stroke="#444" stroke-width="1.5"/><path d="M8.3 1 L8.3 22 M15.6 1 L15.6 22 M1 8 L23 8 M1 15 L23 15" stroke="#444" stroke-width="1.2"/></svg>
<svg style="left:1165px;top:973px;" width="24" height="23" viewBox="0 0 24 23"><rect x="1" y="1" width="22" height="21" fill="none" stroke="#444" stroke-width="1.5"/><path d="M5 17 L19 17 L19 4" fill="none" stroke="#444" stroke-width="1.2"/><path d="M8 5 L8 14" stroke="#444" stroke-width="1.4"/><rect x="6.5" y="4" width="3" height="2" fill="#222"/></svg>
<div style="position:absolute;left:1208.5px;top:984px;width:138px;height:2px;background:#555;"></div>
<svg style="left:1277px;top:978px;" width="13" height="13" viewBox="0 0 13 13"><circle cx="6.5" cy="6.5" r="5.5" fill="#555"/></svg>
<div class="t" style="left:1360.70px;top:985.72px;font-size:21px;font-weight:400;font-style:italic;font-family:'Liberation Sans';color:#444;-webkit-text-stroke:0.35px #444;">+</div>
<div class="t" style="left:1386.04px;top:986.85px;font-size:21.5px;font-weight:400;font-style:normal;font-family:'Liberation Sans';color:#111;transform:scaleX(0.9571);-webkit-text-stroke:0.55px #111;">100</div>
<div style="position:absolute;left:978px;top:896px;width:469px;height:26px;background:#e3e1dd;"></div>
<div style="position:absolute;left:978px;top:904px;width:406px;height:1px;background:#cfcdc8;"></div>
<div style="position:absolute;left:1384px;top:896px;width:1px;height:26px;background:#c9c7c2;"></div>
<div style="position:absolute;left:1420px;top:896px;width:1px;height:26px;background:#c9c7c2;"></div>
<div style="position:absolute;left:978px;top:921px;width:443px;height:1px;background:#bdbbb6;"></div>
<div style="position:absolute;left:1001px;top:273px;width:485px;height:623px;box-sizing:border-box;border-radius:11px;background:#f3f1ed;border:1.5px solid #3c4046;box-shadow:9px 6px 22px rgba(15,20,30,0.5),1px 1px 5px rgba(15,20,30,0.25);overflow:hidden;"><div style="position:absolute;left:0;top:0;width:100%;height:47px;background:linear-gradient(180deg,#ccd8e2 0%,#c6d3de 100%);border-bottom:2px solid #9aa1a7;"></div></div>
<div class="t" style="left:1027.91px;top:301.14px;font-size:27px;font-weight:400;font-style:normal;font-family:'Liberation Sans';color:#141414;transform:scaleX(0.9467);-webkit-text-stroke:0.35px #141414;">Properties</div>
<div class="t" style="left:1376.72px;top:300.59px;font-size:26px;font-weight:400;font-style:normal;font-family:'Liberation Sans';color:#222;transform:scaleX(0.8769);">?</div>
<div style="position:absolute;left:1407px;top:297px;width:20px;height:2px;background:#222;"></div>
<svg style="left:1446px;top:289px;" width="19" height="17" viewBox="0 0 19 17"><path d="M1.5 1.5 L17 15.5 M17 1.5 L1.5 15.5" stroke="#222" stroke-width="1.9"/></svg>
<div class="t" style="left:1028.82px;top:351.99px;font-size:26px;font-weight:400;font-style:normal;font-family:'Liberation Sans';color:#141414;transform:scaleX(0.9807);-webkit-text-stroke:0.35px #141414;">Conditional Formatting</div>
<div style="position:absolute;left:1030px;top:375px;width:256px;height:62px;border-left:1px solid #dcdad5;border-top:1px solid #d6d4cf;background:transparent;"></div>
<div style="position:absolute;left:1036px;top:436px;width:236px;height:1px;background:#d3d1cc;"></div>
<div class="t" style="left:1044.88px;top:406.26px;font-size:23.5px;font-weight:400;font-style:normal;font-family:'Liberation Sans';color:#1a1a1a;transform:scaleX(0.9216);-webkit-text-stroke:0.35px #1a1a1a;">Color scale</div>
<div style="position:absolute;left:1300px;top:374.5px;width:131px;height:81px;box-sizing:border-box;background:#faf9f7;border:1.4px solid #a9a7a2;border-radius:5px;"></div>
<div style="position:absolute;left:1310.5px;top:382px;width:111px;height:65px;background:linear-gradient(180deg,rgba(0,0,0,0.18) 0%,rgba(0,0,0,0) 12%,rgba(0,0,0,0) 88%,rgba(0,0,0,0.15) 100%),linear-gradient(90deg,#d2302a 0%,#e46a2c 12%,#f0c040 24%,#f5e040 30%,#b8d03a 42%,#55bd5a 52%,#2cbfa0 60%,#2ec8e6 68%,#2e6fd0 78%,#3a3aa8 86%,#6a10a0 100%);"></div>
<div class="t" style="left:1027.79px;top:476.79px;font-size:26px;font-weight:400;font-style:normal;font-family:'Liberation Sans';color:#141414;transform:scaleX(1.0036);-webkit-text-stroke:0.35px #141414;">Interactive Controls</div>
<div class="t" style="left:1031.50px;top:522.46px;font-size:23.5px;font-weight:400;font-style:normal;font-family:'Liberation Sans';color:#1a1a1a;transform:scaleX(0.9655);-webkit-text-stroke:0.35px #1a1a1a;">Time Window</div>
<div style="position:absolute;left:1328px;top:518px;width:21px;height:5px;background:#d5d3ce;border-radius:2px;"></div>
<div style="position:absolute;left:1185px;top:517.5px;width:145px;height:7px;box-sizing:border-box;background:#3f52a0;border:1.2px solid #1f2540;border-radius:3.5px;"></div>
<div style="position:absolute;left:1318px;top:511px;width:20px;height:20px;box-sizing:border-box;border-radius:50%;background:#fbfbfa;border:1.8px solid #333;box-shadow:0 1px 2px rgba(0,0,0,0.25);"></div>
<div style="position:absolute;left:1351px;top:500.5px;width:79px;height:39px;box-sizing:border-box;background:#f8f7f4;border:1.3px solid #bdbbb6;border-radius:3px;"></div>
<div class="t" style="left:1385.64px;top:522.48px;font-size:24px;font-weight:400;font-style:normal;font-family:'Liberation Sans';color:#1a1a1a;transform:scaleX(1.0640);-webkit-text-stroke:0.15px #1a1a1a;">25</div>
<div style="position:absolute;left:1028px;top:554px;width:440px;height:1px;background:#dfddd8;"></div>
<div style="position:absolute;left:1030.5px;top:569.5px;width:23.5px;height:23px;box-sizing:border-box;background:#fbfaf8;border:1.4px solid #777;border-radius:4px;"></div>
<div class="t" style="left:1060.44px;top:582.64px;font-size:25px;font-weight:400;font-style:normal;font-family:'Liberation Sans';color:#141414;transform:scaleX(0.9610);-webkit-text-stroke:0.35px #141414;">Show Baseline</div>
<div style="position:absolute;left:1024px;top:608px;width:432px;height:1px;background:#dfddd8;"></div>
<div class="t" style="left:1032.50px;top:638.09px;font-size:26px;font-weight:400;font-style:normal;font-family:'Liberation Sans';color:#141414;transform:scaleX(0.9873);-webkit-text-stroke:0.7px #141414;">Time Window</div>
<div style="position:absolute;left:1032.5px;top:664px;width:425px;height:178px;box-sizing:border-box;background:#f6f5f2;border:1.2px solid #d9d7d2;"></div>
<svg style="left:1030px;top:660px;" width="430" height="160" viewBox="0 0 430 160"><rect x="49.0" y="19.6" width="361.5" height="117.9" fill="#f7f6f3"/><path d="M49.0 46.9 L410.5 46.9" stroke="#d6d4cf" stroke-width="1.3"/><path d="M49.0 80.0 L410.5 80.0" stroke="#d6d4cf" stroke-width="1.3"/><path d="M369.0 112.6 L410.5 112.6" stroke="#d6d4cf" stroke-width="1.3"/><rect x="49.5" y="80" width="320" height="56" fill="#eef2f1" opacity="0.6"/><path d="M123.3 19.6 L123.3 137.5" stroke="#d2d0cb" stroke-width="1"/><path d="M242.2 19.6 L242.2 137.5" stroke="#d2d0cb" stroke-width="1"/><path d="M388.3 19.6 L388.3 137.5" stroke="#d2d0cb" stroke-width="1"/><path d="M49.0 19.8 L410.5 19.8 L410.5 137.0" fill="none" stroke="#777" stroke-width="1.2"/><rect x="50.7" y="105.7" width="3.7" height="30.3" fill="#7fd2cc"/><rect x="56.4" y="104.0" width="6.2" height="32.0" fill="#7fd2cc"/><rect x="65.3" y="104.0" width="5.0" height="32.0" fill="#7fd2cc"/><rect x="72.1" y="96.1" width="4.8" height="39.9" fill="#7fd2cc"/><rect x="79.0" y="97.5" width="4.7" height="38.5" fill="#7fd2cc"/><rect x="85.4" y="104.3" width="4.5" height="31.7" fill="#7fd2cc"/><rect x="92.3" y="100.9" width="5.5" height="35.1" fill="#7fd2cc"/><rect x="100.5" y="108.0" width="5.5" height="28.0" fill="#7fd2cc"/><rect x="108.1" y="107.3" width="4.6" height="28.7" fill="#7fd2cc"/><rect x="115.4" y="102.3" width="5.2" height="33.7" fill="#7fd2cc"/><rect x="123.0" y="92.0" width="4.0" height="44.0" fill="#7fd2cc"/><rect x="129.1" y="94.0" width="4.8" height="42.0" fill="#7fd2cc"/><rect x="136.1" y="100.9" width="5.7" height="35.1" fill="#7fd2cc"/><rect x="143.5" y="96.1" width="5.2" height="39.9" fill="#7fd2cc"/><rect x="150.0" y="92.0" width="5.9" height="44.0" fill="#7fd2cc"/><rect x="157.3" y="96.1" width="4.7" height="39.9" fill="#7fd2ca"/><rect x="164.1" y="105.0" width="4.6" height="31.0" fill="#80d2c8"/><rect x="171.2" y="107.0" width="5.5" height="29.0" fill="#80d2c7"/><rect x="178.3" y="107.0" width="5.2" height="29.0" fill="#81d2c5"/><rect x="185.5" y="105.7" width="4.8" height="30.3" fill="#82d2c4"/><rect x="192.0" y="99.1" width="5.2" height="36.9" fill="#82d3c2"/><rect x="198.5" y="99.1" width="6.2" height="36.9" fill="#83d3c0"/><rect x="206.0" y="86.3" width="4.8" height="49.7" fill="#84d3bf"/><rect x="212.9" y="99.1" width="4.9" height="36.9" fill="#84d3bd"/><rect x="219.8" y="105.0" width="5.0" height="31.0" fill="#85d3bc"/><rect x="227.5" y="96.4" width="4.4" height="39.6" fill="#85d3ba"/><rect x="233.5" y="97.9" width="5.5" height="38.1" fill="#86d4b9"/><rect x="241.4" y="105.3" width="3.9" height="30.7" fill="#87d4b7"/><rect x="247.2" y="107.7" width="5.6" height="28.3" fill="#87d4b5"/><rect x="255.1" y="102.3" width="5.5" height="33.7" fill="#88d4b4"/><rect x="262.6" y="103.2" width="5.2" height="32.8" fill="#89d4b2"/><rect x="269.7" y="109.5" width="4.9" height="26.5" fill="#89d4b1"/><rect x="277.2" y="111.8" width="4.7" height="24.2" fill="#8ad5af"/><rect x="284.1" y="107.0" width="5.6" height="29.0" fill="#8ad5ad"/><rect x="291.6" y="99.8" width="4.6" height="36.2" fill="#8bd5ac"/><rect x="298.2" y="96.5" width="4.7" height="39.5" fill="#8cd5aa"/><rect x="305.3" y="102.0" width="5.2" height="34.0" fill="#8cd5a9"/><rect x="312.5" y="95.8" width="5.2" height="40.2" fill="#8dd5a7"/><rect x="320.0" y="72.9" width="5.9" height="63.1" fill="#f1b845"/><rect x="327.9" y="93.0" width="4.7" height="43.0" fill="#f1b845"/><rect x="334.4" y="88.2" width="4.8" height="47.8" fill="#f1b845"/><rect x="341.2" y="99.9" width="5.5" height="36.1" fill="#f1b845"/><rect x="349.1" y="95.8" width="5.5" height="40.2" fill="#f1b845"/><rect x="356.9" y="68.1" width="4.8" height="67.9" fill="#f1b845"/><rect x="364.2" y="43.9" width="4.6" height="92.1" fill="#f1b845"/><path d="M49.0 19.6 L49.0 144.0" stroke="#222" stroke-width="1.6"/><path d="M49.0 137.4 L410.5 137.4" stroke="#222" stroke-width="1.6"/><path d="M81.0 137.0 L81.0 141.5" stroke="#333" stroke-width="1.4"/><path d="M123.0 137.0 L123.0 141.5" stroke="#333" stroke-width="1.4"/><path d="M165.0 137.0 L165.0 141.5" stroke="#333" stroke-width="1.4"/><path d="M195.7 137.0 L195.7 141.5" stroke="#333" stroke-width="1.4"/><path d="M242.0 137.0 L242.0 141.5" stroke="#333" stroke-width="1.4"/><path d="M320.0 137.0 L320.0 141.5" stroke="#333" stroke-width="1.4"/><path d="M345.8 137.0 L345.8 141.5" stroke="#333" stroke-width="1.4"/><path d="M365.0 137.0 L365.0 141.5" stroke="#333" stroke-width="1.4"/><path d="M388.0 137.0 L388.0 141.5" stroke="#333" stroke-width="1.4"/></svg>
<div class="t" style="left:1050.44px;top:696.09px;font-size:18.5px;font-weight:400;font-style:normal;font-family:'Liberation Sans';color:#222;transform:scaleX(0.9632);-webkit-text-stroke:0.1px #222;">30</div>
<div class="t" style="left:1051.40px;top:744.89px;font-size:18.5px;font-weight:400;font-style:normal;font-family:'Liberation Sans';color:#222;transform:scaleX(0.9150);-webkit-text-stroke:0.1px #222;">40</div>
<div class="t" style="left:1058.92px;top:792.39px;font-size:18.5px;font-weight:400;font-style:normal;font-family:'Liberation Sans';color:#222;transform:scaleX(1.0778);-webkit-text-stroke:0.1px #222;">0</div>
<div class="t" style="left:1142.54px;top:816.89px;font-size:18.5px;font-weight:400;font-style:normal;font-family:'Liberation Sans';color:#222;transform:scaleX(0.9632);-webkit-text-stroke:0.1px #222;">10</div>
<div class="t" style="left:1261.34px;top:816.89px;font-size:18.5px;font-weight:400;font-style:normal;font-family:'Liberation Sans';color:#222;transform:scaleX(0.9632);-webkit-text-stroke:0.1px #222;">20</div>
<div class="t" style="left:1409.10px;top:816.89px;font-size:18.5px;font-weight:400;font-style:normal;font-family:'Liberation Sans';color:#222;transform:scaleX(0.9150);-webkit-text-stroke:0.1px #222;">40</div>
<div class="t" style="left:1184.20px;top:869.06px;font-size:23.5px;font-weight:400;font-style:normal;font-family:'Liberation Sans';color:#1a1a1a;transform:scaleX(0.9937);-webkit-text-stroke:0.35px #1a1a1a;">Time Window</div>
</body></html>
